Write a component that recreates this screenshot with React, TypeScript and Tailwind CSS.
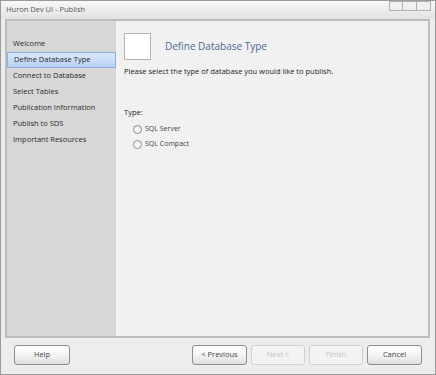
import React from "react";

const F = { fontFamily: '"Open Sans", "DejaVu Sans", sans-serif' };

function Btn({ label, disabled, w }: { label: string; disabled?: boolean; w: string }) {
  return (
    <div
      className={`${w} h-[20px] flex items-center justify-center rounded-[3px] border text-[7.5px] ${
        disabled
          ? "border-[#d0d0d0] text-[#c4c4c4] bg-[#f3f3f3]"
          : "border-[#8e8e8e] text-[#444] bg-gradient-to-b from-[#ffffff] via-[#f4f4f4] to-[#dedede]"
      }`}
    >
      {label}
    </div>
  );
}

export default function App() {
  const items = [
    "Welcome",
    "Define Database Type",
    "Connect to Database",
    "Select Tables",
    "Publication Information",
    "Publish to SDS",
    "Important Resources",
  ];
  return (
    <div style={F} className="w-[436px] h-[375px] border border-[#9a9a9a] bg-[#ededed] flex flex-col overflow-hidden">
      <div className="h-[18px] flex items-start justify-between bg-gradient-to-b from-[#f8f8f8] to-[#e2e2e2]">
        <div className="pl-[5px] pt-[3px] text-[7.5px] leading-[10px] text-[#555]">Huron Dev UI - Publish</div>
        <div className="flex mr-[4px]">
          <div className="w-[14px] h-[10px] border border-[#b0b0b0] bg-[#f0f0f0]" />
          <div className="w-[14px] h-[10px] border border-l-0 border-[#b0b0b0] bg-[#f0f0f0]" />
          <div className="w-[14px] h-[10px] border border-l-0 border-[#b0b0b0] bg-[#f0f0f0]" />
        </div>
      </div>
      <div className="ml-[4px] mr-[5px] h-[319px] border-2 border-[#bdbdbd] flex">
        <div className="w-[109px] bg-[#d7d7d7] pt-[15px]">
          {items.map((t, i) => (
            <div
              key={t}
              className={`h-[16px] flex items-center pl-[6px] text-[7.5px] text-[#2a2a2a] ${
                i === 1 ? "bg-gradient-to-b from-[#dce8fb] to-[#b9d0f5] border border-[#8aaee6] pl-[5px]" : ""
              }`}
            >
              {t}
            </div>
          ))}
        </div>
        <div className="flex-1 bg-[#f1f1f1] pl-[8px] pt-[12px]">
          <div className="flex items-center">
            <div className="w-[27px] h-[27px] bg-white border border-[#b5b5b5]" />
            <div className="ml-[14px] text-[10px] text-[#4b6a95]">Define Database Type</div>
          </div>
          <div className="mt-[6px] text-[7.5px] text-[#222]">Please select the type of database you would like to publish.</div>
          <div className="mt-[30px] text-[7.5px] text-[#222]">Type:</div>
          <div className="mt-[5px] ml-[9px] flex flex-col gap-[3px]">
            {["SQL Server", "SQL Compact"].map((t) => (
              <div key={t} className="flex items-center h-[12px]">
                <div className="w-[9px] h-[9px] rounded-full border border-[#8a8a8a] bg-gradient-to-b from-[#f0f0f0] to-[#ffffff]" />
                <div className="ml-[3px] text-[7px] text-[#444]">{t}</div>
              </div>
            ))}
          </div>
        </div>
      </div>
      <div className="flex items-center pt-[7px] px-[13px]">
        <Btn label="Help" w="w-[56px]" />
        <div className="flex-1" />
        <div className="flex gap-[4px]">
          <Btn label="< Previous" w="w-[55px]" />
          <Btn label="Next >" disabled w="w-[54px]" />
          <Btn label="Finish" disabled w="w-[54px]" />
          <Btn label="Cancel" w="w-[55px]" />
        </div>
      </div>
    </div>
  );
}
